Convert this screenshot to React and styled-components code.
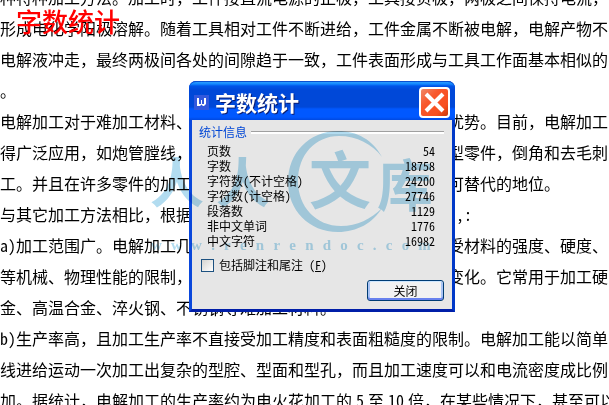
import React from "react";
import styled, { createGlobalStyle } from "styled-components";

const GlobalStyle = createGlobalStyle`
  * { box-sizing: border-box; }
  body {
    margin: 0;
    background: #fff;
    color: #000;
    font-family: "Noto Sans CJK SC", "Liberation Sans", sans-serif;
  }
`;

const Screen = styled.main`
  position: relative;
  height: 100vh;
  overflow: hidden;
`;

const Document = styled.article`
  margin-top: -18px;
  font-size: 16px;
  font-weight: 400;
  line-height: 31px;
`;

const Line = styled.p`
  margin: 0;
  white-space: pre;
`;

const Latin = styled.span`
  margin: 0 ${(p) => (p.$spaced ? "4px" : "0")};
  font-feature-settings: "hwid";
`;

const Caption = styled.h1`
  position: absolute;
  left: 16px;
  top: 5px;
  margin: 0;
  color: #ff0000;
  font-size: 26px;
  font-weight: 500;
  line-height: 32px;
`;

const Dialog = styled.section`
  position: absolute;
  left: 189px;
  top: 81px;
  width: 266px;
  border: 3px solid #0a48dc;
  border-top: 0;
  border-right-color: #0038c8;
  border-bottom-color: #001ea8;
  border-radius: 7px 7px 0 0;
  background: #0a48dc;
`;

const TitleBar = styled.header`
  display: flex;
  align-items: center;
  height: 39px;
  margin: 0 -3px;
  padding: 2px 5px 0 5px;
  gap: 6px;
  border-radius: 7px 7px 0 0;
  border-top: 1px solid #0a50d0;
  background: linear-gradient(#2a9cff 0, #1288ff 2px, #0054e8 4px, #0048d8 8px, #0048d8 25px, #0058ff 27px, #0058ff 35px, #0048e0 38px);
`;

const AppIcon = styled.svg`
  flex: none;
  width: 15px;
  height: 15px;
`;

const Title = styled.h2`
  flex: 1;
  margin: 0;
  color: #fff;
  font-size: 21px;
  font-weight: 700;
  line-height: 30px;
  text-shadow: 1px 1px 0 #0a1c70;
`;

const CloseButton = styled.button`
  width: 31px;
  height: 31px;
  padding: 0;
  border: 2px solid #fff;
  border-radius: 4px;
  background: linear-gradient(135deg, #f08868 0, #f8572c 35%, #f85020 75%, #c83808 100%);
  svg { display: block; width: 27px; height: 27px; }
`;

const DialogBody = styled.div`
  padding: 4px 8px 8px 7px;
  background: #e6e6e6;
  font-size: 12px;
`;

const Group = styled.fieldset`
  margin: 0;
  padding: 0;
  border: 0;
`;

const GroupLabel = styled.legend`
  display: flex;
  align-items: center;
  gap: 4px;
  width: 100%;
  padding: 0;
  color: #0046d5;
  line-height: 16px;
  &::after {
    content: "";
    flex: 1;
    height: 2px;
    border-top: 1px solid #a0a0a0;
    background: #fff;
  }
`;

const Stats = styled.table`
  width: 100%;
  margin-top: 3px;
  padding: 0 9px 0 8px;
  border-spacing: 0;
  font-feature-settings: "hwid";
  line-height: 15px;
  th, td { padding: 0; font-weight: 400; height: 15px; }
  th { text-align: left; }
  td { text-align: right; }
`;

const CheckLabel = styled.label`
  display: flex;
  align-items: center;
  gap: 5px;
  height: 14px;
  margin: 10px 2px 0;
  line-height: 14px;
  font-feature-settings: "hwid";
`;

const CheckBox = styled.input`
  appearance: none;
  width: 13px;
  height: 13px;
  margin: 0;
  border: 1px solid #1c5180;
  background: linear-gradient(135deg, #d4d4d0, #fff);
  &:checked { background: #1c5180; }
`;

const Actions = styled.footer`
  display: flex;
  justify-content: flex-end;
  margin-top: 8px;
`;

const ActionButton = styled.button`
  width: 77px;
  height: 21px;
  padding: 0;
  border: 1px solid #003c74;
  border-radius: 3px;
  background: #f2f2f2;
  box-shadow: inset 0 1px 0 #cee7ff, inset 0 -2px 0 #6982ee, inset 2px 0 0 #a9c4f5, inset -2px 0 0 #a9c4f5;
  color: #000;
  font: inherit;
  line-height: 18px;
`;

const Watermark = styled.div`
  position: absolute;
  left: 151px;
  top: 128px;
  width: 280px;
  color: #b2dcf0;
  mix-blend-mode: multiply;
  pointer-events: none;
`;

const Emblem = styled.svg`
  display: block;
  width: 280px;
  height: 108px;
  font-weight: 700;
`;

const Address = styled.div`
  display: flex;
  justify-content: space-between;
  font: 700 15px/18px "Liberation Serif", serif;
`;

const stats = [
  ["页数", "54"],
  ["字数", "18758"],
  ["字符数(不计空格)", "24200"],
  ["字符数(计空格)", "27746"],
  ["段落数", "1129"],
  ["非中文单词", "1776"],
  ["中文字符", "16982"],
];

export default function App() {
  return (
    <Screen>
      <GlobalStyle />
      <Document>
        <Line>种特种加工方法。加工时，工件接直流电源的正极，工具接负极，两极之间保持电流，</Line>
        <Line>形成电化学阳极溶解。随着工具相对工件不断进给，工件金属不断被电解，电解产物不</Line>
        <Line>电解液冲走，最终两极间各处的间隙趋于一致，工件表面形成与工具工作面基本相似的</Line>
        <Line>。</Line>
        <Line>电解加工对于难加工材料、形状复杂或薄壁零件的加工具有显著优势。目前，电解加工</Line>
        <Line>得广泛应用，如炮管膛线，叶片，整体叶轮，模具，异型孔及异型零件，倒角和去毛刺</Line>
        <Line>工。并且在许多零件的加工中，电解加工工艺已占有重要甚至不可替代的地位。</Line>
        <Line>
          与其它加工方法相比，根据电解原理可知电解加工具有以下特点<Latin>{" ,:"}</Latin>
        </Line>
        <Line>
          <Latin>a)</Latin>加工范围广。电解加工几乎可以加工所有的导电材料，并且不受材料的强度、硬度、
        </Line>
        <Line>等机械、物理性能的限制，加工后材料的金相组织基本上不发生变化。它常用于加工硬</Line>
        <Line>金、高温合金、淬火钢、不锈钢等难加工材料。</Line>
        <Line>
          <Latin>b)</Latin>生产率高，且加工生产率不直接受加工精度和表面粗糙度的限制。电解加工能以简单
        </Line>
        <Line>线进给运动一次加工出复杂的型腔、型面和型孔，而且加工速度可以和电流密度成比例</Line>
        <Line>
          加。据统计，电解加工的生产率约为电火花加工的<Latin $spaced>5</Latin>至<Latin $spaced>10</Latin>倍，在某些情况下，甚至可以
        </Line>
      </Document>
      <Caption>字数统计</Caption>
      <Dialog role="dialog" aria-labelledby="dialog-title">
        <TitleBar>
          <AppIcon viewBox="0 0 15 15" aria-hidden="true">
            <rect width="15" height="15" fill="#3358dc" />
            <path d="M3 3H5V9H7V5H8V9H10V3H12V9L10 11H9L7.500 9.500L6 11H3Z" fill="#fff" />
          </AppIcon>
          <Title id="dialog-title">字数统计</Title>
          <CloseButton type="button" aria-label="关闭窗口">
            <svg viewBox="0 0 27 27" aria-hidden="true">
              <path d="M5 5L22 22M22 5L5 22" stroke="#fff" strokeWidth="4" />
            </svg>
          </CloseButton>
        </TitleBar>
        <DialogBody>
          <Group>
            <GroupLabel>统计信息</GroupLabel>
            <Stats>
              <tbody>
                {stats.map(([name, value]) => (
                  <tr key={name}>
                    <th scope="row">{name}</th>
                    <td>{value}</td>
                  </tr>
                ))}
              </tbody>
            </Stats>
          </Group>
          <CheckLabel>
            <CheckBox type="checkbox" />
            <span>包括脚注和尾注 (<u>F</u>)</span>
          </CheckLabel>
          <Actions>
            <ActionButton type="button">关闭</ActionButton>
          </Actions>
        </DialogBody>
      </Dialog>
      <Watermark aria-hidden="true">
        <Emblem viewBox="0 0 280 108" fill="currentColor">
          <path d="M231 29C222 12 206 3 187 3C158 3 137 25 137 54C137 82 158 104 187 104C206 104 222 95 231 80C220 91 206 98 190 98C165 98 147 79 147 53C147 27 164 8 188 8C206 8 221 16 231 29Z" />
          <text x="-1" y="75" fontSize="54">人</text>
          <text x="65" y="75" fontSize="54">人</text>
          <text x="158" y="76" fontSize="62">文</text>
          <text x="226" y="78" fontSize="56">库</text>
        </Emblem>
        <Address>
          {[..."www.renrendoc.com"].map((letter, i) => (
            <span key={i}>{letter}</span>
          ))}
        </Address>
      </Watermark>
    </Screen>
  );
}
